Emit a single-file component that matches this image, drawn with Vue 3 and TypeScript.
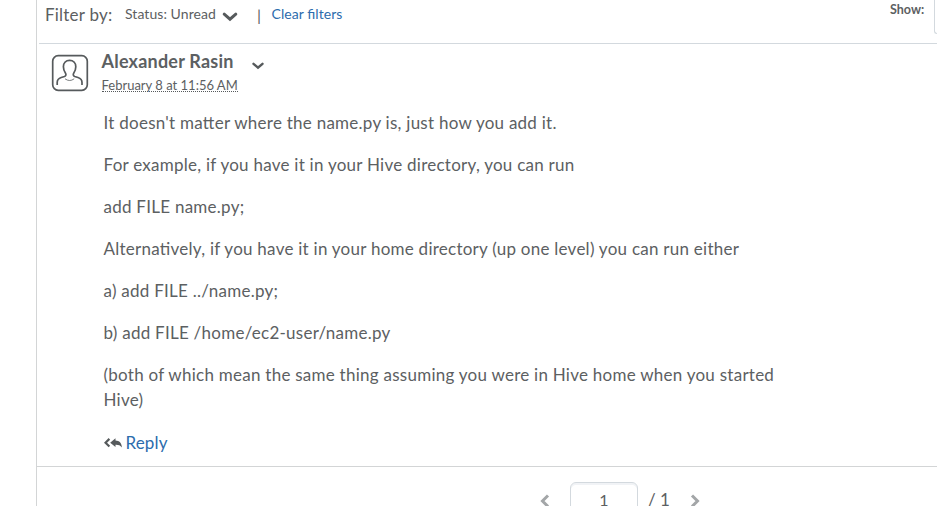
<script setup lang="ts">
const paragraphs: string[] = [
  "It doesn't matter where the name.py is, just how you add it.",
  'For example, if you have it in your Hive directory, you can run',
  'add FILE name.py;',
  'Alternatively, if you have it in your home directory (up one level) you can run either',
  'a) add FILE ../name.py;',
  'b) add FILE /home/ec2-user/name.py',
  '(both of which mean the same thing assuming you were in Hive home when you started Hive)',
]
</script>

<template>
  <div class="page">
    <main class="panel">
      <header class="filters">
        <span class="filter-label">Filter by:</span>
        <span class="status">Status: Unread</span>
        <svg class="status-chevron" width="16" height="10" viewBox="0 0 16 10"><path d="M2.2 2.2 8 7.2l5.800-5" /></svg>
        <span class="bar">|</span>
        <a class="clear">Clear filters</a>
        <span class="show">Show:</span>
        <div class="select"></div>
      </header>
      <article class="post">
        <svg class="avatar" width="38" height="38" viewBox="0 0 38 38">
          <rect x="1.700" y="1.700" width="34.600" height="34.600" rx="5.500" />
          <path d="M6.200 31v-2.500c0-3 1.600-4.200 4-5l3.300-1c1.500-.5 1.900-2.200.9-3.600-1.300-1.900-2-3.900-2-6.200 0-4 2.600-6.400 6.200-6.400s6.200 2.400 6.200 6.400c0 2.300-.7 4.300-2 6.200-1 1.400-.6 3.100.9 3.600l3.300 1c2.400.8 4 2 4 5V31" />
          <path class="collar" d="M14 24.800q4.600 3.400 9.200 0" />
        </svg>
        <div class="content">
          <div class="author-row">
            <span class="author">Alexander Rasin</span>
            <svg class="author-chevron" width="12" height="8" viewBox="0 0 12 8"><path d="M1.500 1.800 6 5.700l4.500-3.900" /></svg>
          </div>
          <div class="date-row"><span class="date">February 8 at 11:56 AM</span></div>
          <div class="body">
            <p v-for="text in paragraphs" :key="text">{{ text }}</p>
          </div>
          <div class="reply">
            <svg width="18" height="10" viewBox="0 0 18 10">
              <path class="solid" d="M11.500.3v2.300c3.900.1 6.100 2.500 6.400 6.800-1.600-2.100-3.500-2.800-6.400-2.700V9L6.200 4.700z" />
              <path class="back" d="M5.400.9 1.500 4.700l3.900 3.800" />
            </svg>
            <a>Reply</a>
          </div>
        </div>
      </article>
      <footer class="pager">
        <svg width="10" height="14" viewBox="0 0 10 14"><path d="M8 1.500 2.500 7 8 12.500" /></svg>
        <div class="page-input">1</div>
        <span class="total">/ 1</span>
        <svg width="10" height="14" viewBox="0 0 10 14"><path d="M2 1.500 7.500 7 2 12.500" /></svg>
      </footer>
    </main>
  </div>
</template>

<style>
body {
  background: #fff;
  overflow: hidden;
}
</style>

<style scoped>
.page {
  height: 506px;
  padding-left: 36px;
  box-sizing: border-box;
  overflow: hidden;
  color: #5c6062;
  font-family: Lato, sans-serif;
  font-feature-settings: 'liga' 1;
  white-space: nowrap;
}
.panel {
  height: 506px;
  box-sizing: border-box;
  border-left: 1px solid #d3d5d6;
}
.filters {
  display: flex;
  align-items: flex-start;
  height: 43px;
  margin-left: 2px;
  padding-left: 6px;
  border-bottom: 1px solid #d3d9de;
}
.filter-label {
  width: 80px;
  font-size: 17px;
  letter-spacing: 0.220px;
  line-height: 29px;
}
.status {
  width: 97px;
  font-size: 14px;
  letter-spacing: 0.060px;
  line-height: 28px;
}
.status-chevron {
  margin-top: 12px;
}
.bar {
  width: 14.500px;
  margin-left: 19px;
  font-size: 16px;
  line-height: 29px;
}
.clear {
  font-size: 14px;
  letter-spacing: 0.060px;
  line-height: 28px;
  color: #2c6cad;
}
.show {
  margin-left: auto;
  width: 44px;
  font-size: 12.500px;
  font-weight: 700;
  line-height: 19px;
}
.select {
  width: 3px;
  height: 34px;
  box-sizing: border-box;
  border: 1px solid #d3d9de;
  border-width: 0 0 1px 1px;
  border-bottom-left-radius: 6px;
}
svg path,
svg rect {
  fill: none;
  stroke: #565a5c;
}
.status-chevron path {
  stroke-width: 3;
  stroke-linecap: round;
}
.author-chevron path {
  stroke-width: 2.400;
  stroke-linecap: round;
}
.post {
  display: flex;
  height: 422px;
  padding-left: 14px;
  border-bottom: 1px solid #d3d5d6;
}
.avatar {
  margin-top: 10px;
  flex: none;
}
.avatar rect,
.avatar path {
  stroke-width: 1.700;
}
.avatar .collar {
  stroke-width: 0.800;
}
.content {
  margin-left: 12.500px;
}
.author-row {
  display: flex;
  height: 35px;
}
.author {
  width: 150.500px;
  font-size: 18px;
  font-weight: 700;
  letter-spacing: 0.220px;
  line-height: 35px;
}
.author-chevron {
  margin-top: 18px;
}
.date-row {
  height: 31px;
  font-size: 13px;
  line-height: 13px;
}
.date {
  display: inline-block;
  height: 12px;
  border-bottom: 1px dotted #565a5c;
}
.body {
  width: 690px;
  padding-left: 2px;
  font-size: 17px;
  letter-spacing: 0.255px;
  line-height: 25px;
  white-space: normal;
}
.body p {
  margin: 0 0 17px;
}
.reply {
  display: flex;
  align-items: center;
  gap: 4px;
  padding: 1px 0 0 2px;
  font-size: 17px;
  letter-spacing: 0.150px;
  line-height: 26px;
}
.reply a {
  color: #2c6cad;
}
.reply .solid {
  fill: #565a5c;
  stroke: none;
}
.reply .back {
  stroke-width: 2.200;
}
.pager {
  display: flex;
  align-items: flex-start;
  height: 39px;
  padding-left: 503px;
}
.pager svg {
  margin-top: 27px;
}
.pager path {
  stroke: #a3a6a8;
  stroke-width: 3;
}
.page-input {
  width: 68px;
  height: 40px;
  margin: 15px 10px 0 20px;
  box-sizing: border-box;
  border: 1px solid #d3d9de;
  border-radius: 6px;
  box-shadow: inset 0 2px 0 #f1f3f6;
  font-size: 16px;
  line-height: 34px;
  text-align: center;
}
.total {
  width: 42px;
  font-size: 17px;
  line-height: 66px;
}
</style>
